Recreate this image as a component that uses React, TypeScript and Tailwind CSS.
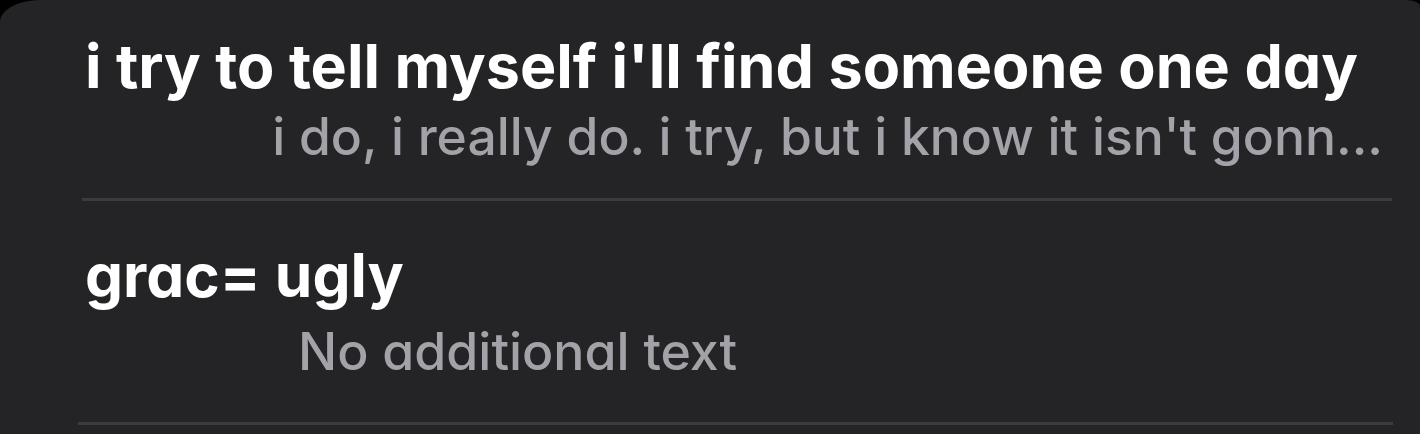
export default function App() {
  return (
    <div className="w-full h-[434px] bg-black overflow-hidden">
      <div className="h-full bg-[#242426] rounded-tl-[40px_22px] rounded-tr-[14px_6px] pt-[30px] font-['Inter',sans-serif] [font-feature-settings:'cv11']">
        {/* first note */}
        <div className="pl-[85px] pr-[37px]">
          <p className="text-white font-bold text-[61px] leading-[72px] whitespace-nowrap">
            i try to tell myself i'll find someone one day
          </p>
          <p className="text-[#a2a2a8] font-medium text-[51.6px] leading-[68px] whitespace-nowrap text-right [font-feature-settings:normal]">
            i do, i really do. i try, but i know it isn't gonn...
          </p>
        </div>
        <div className="ml-[82px] mr-[28px] mt-[28px] h-[3px] bg-[#3c3c3f]" />

        {/* second note */}
        <div className="pl-[85px] pt-[39px]">
          <p className="text-white font-bold text-[60.3px] leading-[72px] whitespace-nowrap">
            grac= ugly
          </p>
          <p className="pl-[213px] mt-[5px] text-[#a2a2a8] font-medium text-[51.8px] leading-[68px] whitespace-nowrap">
            No additional text
          </p>
        </div>
        <div className="ml-[78px] mr-[27px] mt-[37px] h-[3px] bg-[#3c3c3f]" />
      </div>
    </div>
  );
}
